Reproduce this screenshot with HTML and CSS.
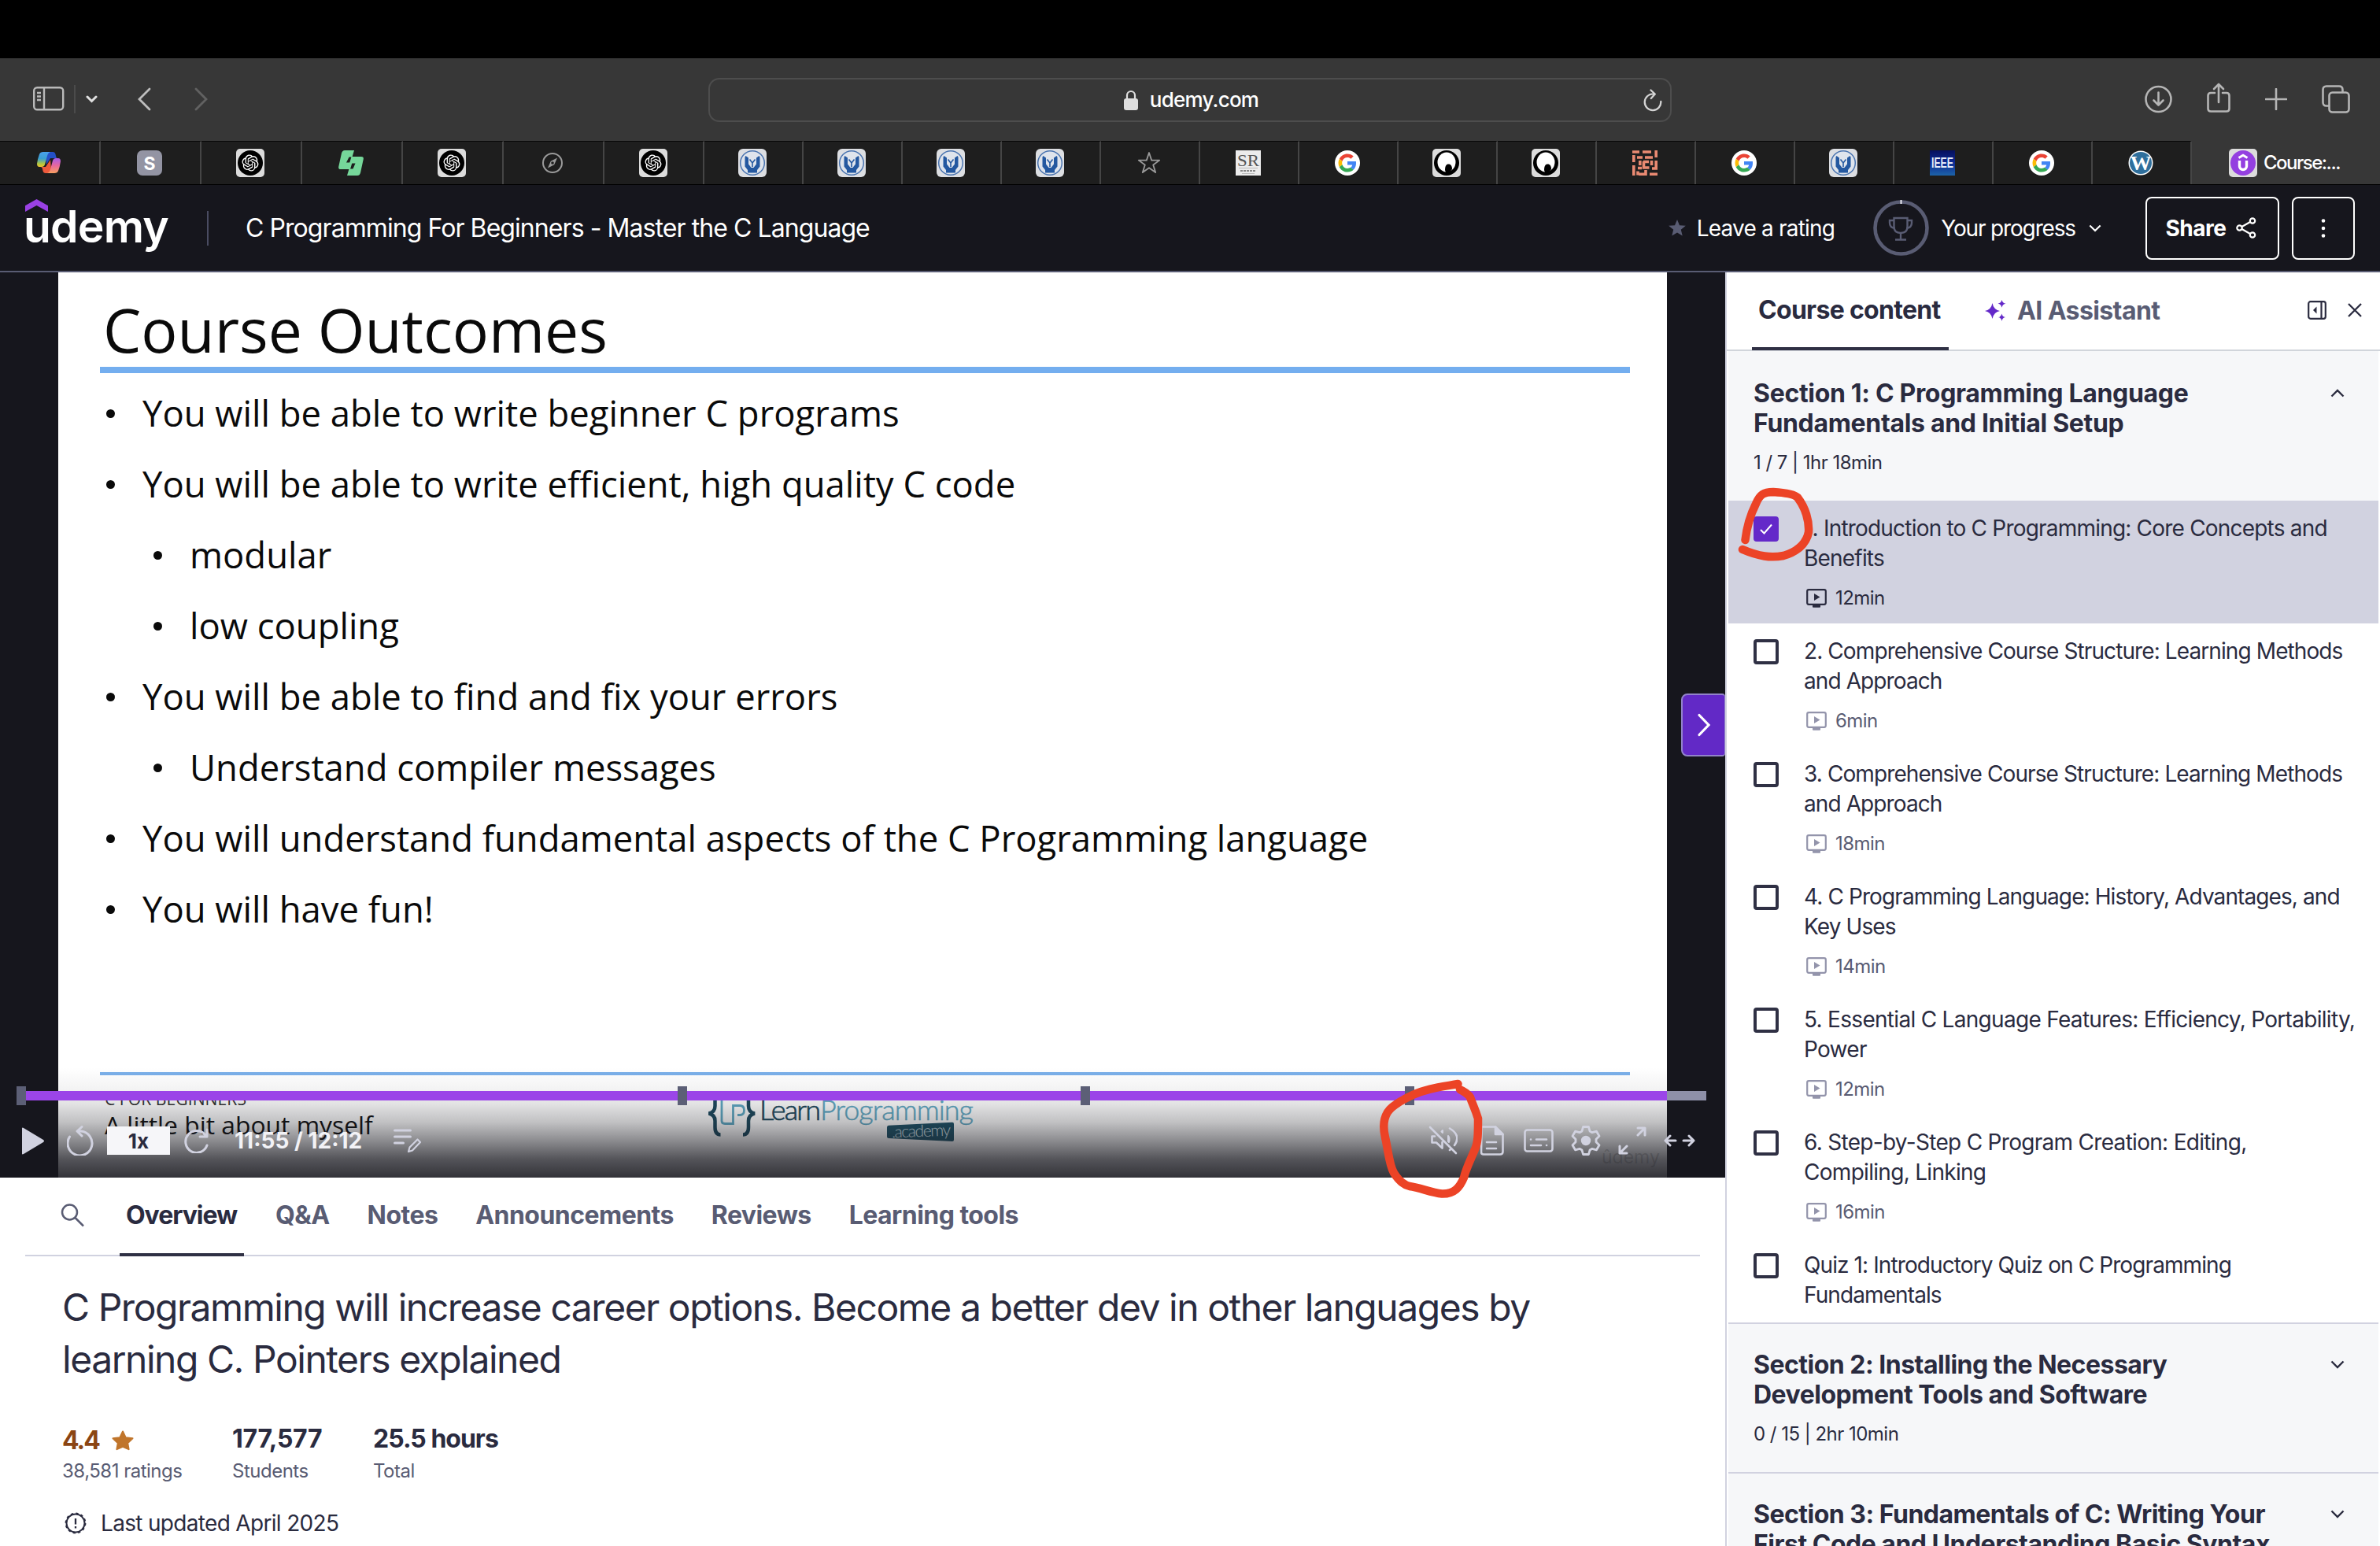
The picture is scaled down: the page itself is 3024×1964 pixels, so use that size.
FILE: index.html
```html
<!DOCTYPE html>
<html lang="en">
<head>
<meta charset="utf-8">
<title>Course: C Programming For Beginners - Master the C Language | Udemy</title>
<link rel="stylesheet" href="styles.css">
</head>
<body>
<svg class="defs" aria-hidden="true">
  <defs>
    <linearGradient id="cp1" x1="0" y1="0" x2="0" y2="1"><stop offset="0" stop-color="#4aa0ec"/><stop offset=".45" stop-color="#3b9fd0"/><stop offset=".8" stop-color="#b5c83c"/><stop offset="1" stop-color="#f0c030"/></linearGradient>
    <linearGradient id="cp2" x1="0" y1="0" x2="0" y2="1"><stop offset="0" stop-color="#a95be8"/><stop offset=".5" stop-color="#e8689c"/><stop offset="1" stop-color="#f7a060"/></linearGradient>
    <linearGradient id="ie" x1="0" y1="0" x2="0" y2="1"><stop offset="0" stop-color="#06105c"/><stop offset=".5" stop-color="#0c2a94"/><stop offset="1" stop-color="#1d63a8"/></linearGradient>
  </defs>
  <symbol id="openai" viewBox="0 0 36 36">
    <rect width="36" height="36" rx="5" fill="#dcdcdc"/><circle cx="18" cy="18" r="16" fill="#000"/>
    <path transform="translate(7.5 7.5) scale(.875)" fill="#fff" d="M22.2819 9.8211a5.9847 5.9847 0 0 0-.5157-4.9108 6.0462 6.0462 0 0 0-6.5098-2.9A6.0651 6.0651 0 0 0 4.9807 4.1818a5.9847 5.9847 0 0 0-3.9977 2.9 6.0462 6.0462 0 0 0 .7427 7.0966 5.98 5.98 0 0 0 .511 4.9107 6.051 6.051 0 0 0 6.5146 2.9001A5.9847 5.9847 0 0 0 13.2599 24a6.0557 6.0557 0 0 0 5.7718-4.2058 5.9894 5.9894 0 0 0 3.9977-2.9001 6.0557 6.0557 0 0 0-.7475-7.0729zm-9.022 12.6081a4.4755 4.4755 0 0 1-2.8764-1.0408l.1419-.0804 4.7783-2.7582a.7948.7948 0 0 0 .3927-.6813v-6.7369l2.02 1.1686a.071.071 0 0 1 .038.052v5.5826a4.504 4.504 0 0 1-4.4945 4.4944zm-9.6607-4.1254a4.4708 4.4708 0 0 1-.5346-3.0137l.142.0852 4.783 2.7582a.7712.7712 0 0 0 .7806 0l5.8428-3.3685v2.3324a.0804.0804 0 0 1-.0332.0615L9.74 19.9502a4.4992 4.4992 0 0 1-6.1408-1.6464zM2.3408 7.8956a4.485 4.485 0 0 1 2.3655-1.9728V11.6a.7664.7664 0 0 0 .3879.6765l5.8144 3.3543-2.0201 1.1685a.0757.0757 0 0 1-.071 0l-4.8303-2.7865A4.504 4.504 0 0 1 2.3408 7.872zm16.5963 3.8558L13.1038 8.364 15.1192 7.2a.0757.0757 0 0 1 .071 0l4.8303 2.7913a4.4944 4.4944 0 0 1-.6765 8.1042v-5.6772a.79.79 0 0 0-.407-.667zm2.0107-3.0231l-.142-.0852-4.7735-2.7818a.7759.7759 0 0 0-.7854 0L9.409 9.2297V6.8974a.0662.0662 0 0 1 .0284-.0615l4.8303-2.7866a4.4992 4.4992 0 0 1 6.6802 4.66zM8.3065 12.863l-2.02-1.1638a.0804.0804 0 0 1-.038-.0567V6.0742a4.4992 4.4992 0 0 1 7.3757-3.4537l-.142.0805L8.704 5.459a.7948.7948 0 0 0-.3927.6813zm1.0976-2.3654l2.602-1.4998 2.6069 1.4998v2.9994l-2.5974 1.4997-2.6067-1.4997Z"/>
  </symbol>
  <symbol id="hands" viewBox="0 0 36 36">
    <rect width="36" height="36" rx="6" fill="#dcdee2"/><circle cx="18" cy="18" r="15.300" fill="#dfe4ec" stroke="#4a74b0" stroke-width="1.500"/>
    <path fill="#2458a0" d="M9.500 9l3.500 2.500v8l3.500 4.500h3l3.500-4.500v-8L26.500 9l1 1.500v12L24 27v3.500H12V27l-3.500-4.500v-12z"/>
    <path fill="none" stroke="#2458a0" stroke-width="1.600" d="M14.500 13.500l3.500 4.500 3.500-4.500M18 17v6"/>
  </symbol>
  <symbol id="google" viewBox="0 0 32 32">
    <circle cx="16" cy="16" r="16" fill="#fff"/>
    <g transform="translate(4.500 4.500) scale(.48)">
      <path fill="#EA4335" d="M24 9.500c3.540 0 6.710 1.220 9.210 3.600l6.850-6.850C35.900 2.380 30.470 0 24 0 14.620 0 6.510 5.380 2.560 13.220l7.980 6.190C12.430 13.720 17.740 9.500 24 9.500z"/>
      <path fill="#4285F4" d="M46.980 24.550c0-1.570-.15-3.090-.38-4.550H24v9.020h12.940c-.58 2.960-2.260 5.480-4.780 7.180l7.730 6c4.510-4.180 7.090-10.360 7.090-17.650z"/>
      <path fill="#FBBC05" d="M10.530 28.590c-.48-1.450-.76-2.990-.76-4.590s.27-3.140.76-4.590l-7.980-6.190C.92 16.460 0 20.120 0 24c0 3.880.92 7.540 2.560 10.780l7.970-6.190z"/>
      <path fill="#34A853" d="M24 48c6.480 0 11.930-2.130 15.890-5.810l-7.730-6c-2.150 1.450-4.920 2.300-8.160 2.300-6.260 0-11.570-4.220-13.470-9.910l-7.980 6.190C6.510 42.620 14.620 48 24 48z"/>
    </g>
  </symbol>
  <symbol id="quill" viewBox="0 0 36 36">
    <rect width="36" height="36" rx="5" fill="#dcdcdc"/><circle cx="18" cy="18" r="16" fill="#000"/><ellipse cx="18" cy="17" rx="11.500" ry="12.500" fill="#fff"/><path fill="#000" d="M16 27c0-5 1.500-7.500 4.500-7.500s4.500 2.500 4.500 6.500l-3 4h-5z"/>
  </symbol>
  <symbol id="lesson" viewBox="0 0 26 24">
    <rect x="1.200" y="1.200" width="23.600" height="18.600" rx="2" fill="none" stroke="currentColor" stroke-width="2.200"/><path fill="currentColor" d="M10 6l7.500 4.500L10 15zM8 20.500h10V23q0 .8-1 .8H9q-1 0-1-.8z"/>
  </symbol>
  <symbol id="down" viewBox="0 0 18 11"><path d="M1.500 1.500L9 9l7.500-7.500" fill="none" stroke="currentColor" stroke-width="2.400"/></symbol>
</svg>

<div class="bezel"></div>

<div class="toolbar">
  <div class="toolbar-left">
    <svg width="40" height="31" viewBox="0 0 40 31" fill="none" stroke="#b9b9b9" stroke-width="2.400"><rect x="1.200" y="1.200" width="37" height="28" rx="4"/><path d="M14 1v28M5 8h5M5 12.500h5M5 17h5"/></svg>
    <span class="tool-sep"></span>
    <svg class="tool-menu" width="15" height="10" viewBox="0 0 15 10" fill="none" stroke="#e0e0e0" stroke-width="3" stroke-linecap="round"><path d="M2 2l5.500 5.500L13 2"/></svg>
    <svg class="tool-back" width="17" height="30" viewBox="0 0 17 30" fill="none" stroke="#bdbdbd" stroke-width="2.800" stroke-linecap="round"><path d="M15 2L2 15l13 13"/></svg>
    <svg class="tool-fwd" width="17" height="30" viewBox="0 0 17 30" fill="none" stroke="#616161" stroke-width="2.800" stroke-linecap="round"><path d="M2 2l13 13L2 28"/></svg>
  </div>
  <div class="address">
    <svg width="18" height="26" viewBox="0 0 18 26"><rect y="11" width="18" height="15" rx="3" fill="#dedede"/><path d="M4 12V7a5 5 0 0 1 10 0v5" fill="none" stroke="#dedede" stroke-width="2.200"/></svg>
    <span>udemy.com</span>
    <svg class="reload" width="24" height="29" viewBox="0 0 24 29" fill="none" stroke="#d4d4d4" stroke-width="2.300" stroke-linecap="round" stroke-linejoin="round"><path d="M13 6.500A10.300 10.300 0 1 0 22.300 16M9.500 1.500l5.300 5-5 5.500"/></svg>
  </div>
  <div class="toolbar-right">
    <svg width="35" height="36" viewBox="0 0 35 36"><circle cx="17.500" cy="18" r="16"/><path d="M17.500 9.500v16M11.500 19.500l6 6 6-6"/></svg>
    <svg class="tool-share" width="30" height="38" viewBox="0 0 30 38"><path d="M10 13H5q-3.500 0-3.500 3.500V33q0 3.500 3.500 3.500h20q3.500 0 3.500-3.500V16.500Q28.500 13 25 13h-5M15 25V2M9 8l6-6 6 6"/></svg>
    <svg width="28" height="28" viewBox="0 0 28 28"><path d="M14 1v26M1 14h26"/></svg>
    <svg width="36" height="36" viewBox="0 0 36 36"><rect x="9.500" y="9.500" width="25" height="25" rx="4"/><path d="M9 26.500H6q-4.500 0-4.500-4.500V6Q1.500 1.500 6 1.500h16q4.500 0 4.500 4.500v3"/></svg>
  </div>
</div>

<div class="tabstrip">
  <div class="btab wide"><svg width="30" height="28" viewBox="0 0 30 28"><path fill="#2450c8" d="M14 0h6q3 0 3.500 3l1 4q.3 1 1.500 1h-9l-5 8-1-10z"/><path fill="#ee5a3c" d="M1 19h10l6-9 1 12-3 5H11q-3 0-3.500-3L6.500 20q-1-1-2.500-1z"/><path fill="url(#cp1)" d="M8 0h9q-3 1-4 5l-3 11q-1 3-4 3H3q-3 0-3-4Q1 8 3 3 4 0 8 0z"/><path fill="url(#cp2)" d="M22 27h-9q3-1 4-5l3-11q1-3 4-3h3q3 0 3 4-1 7-3 12-1 3-5 3z"/></svg></div>
  <div class="btab wide"><span class="fav-s">S</span></div>
  <div class="btab wide"><svg width="36" height="36"><use href="#openai"/></svg></div>
  <div class="btab wide"><svg width="32" height="32" viewBox="0 0 32 32" fill="#76d79a"><path d="M8 0h12l-2.500 8.500h-4L10 15.500h7.500L15 24H3q-3.500 0-2.700-3.500L4 3.500Q5 0 8 0z"/><path d="M24 32H11l2.500-8.500h5l3-7H14L16.500 8H29q3.500 0 2.700 3.500L28 28.500Q27 32 24 32z"/></svg></div>
  <div class="btab wide"><svg width="36" height="36"><use href="#openai"/></svg></div>
  <div class="btab wide"><svg width="28" height="28" viewBox="0 0 28 28"><circle cx="14" cy="14" r="12" fill="none" stroke="#9b9b9b" stroke-width="2"/><path fill="#9b9b9b" d="M20 7.500l-3.800 8.700L8 20.500l3.800-8.700z"/><circle cx="14" cy="14" r="1.800" fill="#1e1e1e"/></svg></div>
  <div class="btab wide"><svg width="36" height="36"><use href="#openai"/></svg></div>
  <div class="btab"><svg width="36" height="36"><use href="#hands"/></svg></div>
  <div class="btab"><svg width="36" height="36"><use href="#hands"/></svg></div>
  <div class="btab"><svg width="36" height="36"><use href="#hands"/></svg></div>
  <div class="btab"><svg width="36" height="36"><use href="#hands"/></svg></div>
  <div class="btab"><svg width="30" height="30" viewBox="0 0 30 30"><path fill="none" stroke="#9b9b9b" stroke-width="1.800" stroke-linejoin="round" d="M15 2l3.200 9.600h10L20.200 17.500l3 9.600L15 21.200 6.800 27.100l3-9.600-8-5.900h10z"/></svg></div>
  <div class="btab"><svg width="32" height="32" viewBox="0 0 32 32"><rect width="32" height="32" fill="#ececec"/><text x="2" y="20" font-family="Liberation Serif" font-size="22" textLength="28" lengthAdjust="spacingAndGlyphs" fill="#555">SR</text><path stroke="#bbb" d="M4 22.500h24M8 29.500h16"/><path stroke="#888" stroke-width="2" stroke-dasharray="3 1" d="M6 26h20"/></svg></div>
  <div class="btab"><svg width="32" height="32"><use href="#google"/></svg></div>
  <div class="btab"><svg width="36" height="36"><use href="#quill"/></svg></div>
  <div class="btab"><svg width="36" height="36"><use href="#quill"/></svg></div>
  <div class="btab"><svg width="32" height="32" viewBox="0 0 32 32" fill="none" stroke="#e98a72" stroke-width="3.600"><path d="M0 2h9M13 2h11M30.200 0v9M1.800 6v9M6 9h7M16 9h10M9.800 13v6M24.500 13v6M1.800 19v13M30.200 13v9M14 14.500h7M14.500 14v8h7M7 22.500h5M25 23h7M8 30.200h10M17 25v7M22 30.200h10M7 26.500v5"/></svg></div>
  <div class="btab"><svg width="32" height="32"><use href="#google"/></svg></div>
  <div class="btab"><svg width="36" height="36"><use href="#hands"/></svg></div>
  <div class="btab"><svg width="32" height="32" viewBox="0 0 32 32"><rect width="32" height="32" fill="url(#ie)"/><text x="2" y="22" font-family="Liberation Sans" font-weight="700" font-size="19" textLength="28" lengthAdjust="spacingAndGlyphs" fill="#e6ecf8">IEEE</text></svg></div>
  <div class="btab"><svg width="32" height="32"><use href="#google"/></svg></div>
  <div class="btab"><svg width="32" height="32" viewBox="0 0 32 32"><circle cx="16" cy="16" r="15.500" fill="#fff"/><circle cx="16" cy="16" r="14" fill="#2f6f9c"/><text x="16" y="25" text-anchor="middle" font-family="Liberation Serif" font-weight="700" font-size="26" textLength="27" lengthAdjust="spacingAndGlyphs" fill="#fff">W</text></svg></div>
  <div class="btab current"><svg width="36" height="36" viewBox="0 0 36 36"><rect width="36" height="36" rx="5" fill="#dcdcdc"/><circle cx="18" cy="18" r="16" fill="#9440e0"/><path d="M12.500 11.500L18 8.300l5.500 3.200" fill="none" stroke="#fff" stroke-width="3"/><path d="M13.500 15v7a4.500 4.500 0 0 0 9 0v-7" fill="none" stroke="#fff" stroke-width="3.400"/></svg><span>Course:...</span></div>
</div>

<header class="header">
  <div class="logo"><svg class="logo-hat" width="29" height="17" viewBox="0 0 29 17"><path fill="#9a41e4" d="M14.500 0L29 8.300V16L14.500 8 0 16V8.300z"/></svg><span>udemy</span></div>
  <span class="header-sep"></span>
  <h1 class="course-title">C Programming For Beginners - Master the C Language</h1>
  <div class="rate"><svg width="22" height="21" viewBox="0 0 22 21"><path fill="#595c73" d="M11 0l3 7.200 7.800.6-6 5 1.900 7.700L11 16.400l-6.700 4.100 1.900-7.700-6-5L8 7.200z"/></svg><span>Leave a rating</span></div>
  <div class="progress">
    <svg width="71" height="71" viewBox="0 0 71 71" fill="none"><circle cx="35.500" cy="35.500" r="33" stroke="#595c73" stroke-width="4.600"/><path d="M35.500 0v5" stroke="#e8e8f0" stroke-width="2"/><g stroke="#595c73" stroke-width="2.400"><path d="M26.500 23h17v11q0 8-8.500 8t-8.500-8z"/><path d="M26 26h-5v3q0 6 6.500 7M44 26h5v3q0 6-6.500 7M35 42v8M28 50.500h14"/></g></svg>
    <span>Your progress</span>
    <svg width="16" height="10"><use href="#down"/></svg>
  </div>
  <button class="btn share"><span>Share</span><svg width="26" height="27" viewBox="0 0 26 27" fill="none" stroke="#fff" stroke-width="2.200"><circle cx="4.500" cy="13.500" r="3.200"/><circle cx="21" cy="4.500" r="3.200"/><circle cx="21" cy="22.500" r="3.200"/><path d="M7.500 12L18 6M7.500 15L18 21"/></svg></button>
  <button class="btn more"><svg width="6" height="26" viewBox="0 0 6 26" fill="#fff"><circle cx="3" cy="3.500" r="2.300"/><circle cx="3" cy="13" r="2.300"/><circle cx="3" cy="22.500" r="2.300"/></svg></button>
</header>

<div class="layout">
  <main>
    <section class="player">
      <div class="slide">
        <h2>Course Outcomes</h2>
        <ul>
          <li>You will be able to write beginner C programs</li>
          <li>You will be able to write efficient, high quality C code</li>
          <li class="sub">modular</li>
          <li class="sub">low coupling</li>
          <li>You will be able to find and fix your errors</li>
          <li class="sub">Understand compiler messages</li>
          <li>You will understand fundamental aspects of the C Programming language</li>
          <li>You will have fun!</li>
        </ul>
        <div class="slide-foot">
          <div class="foot-notes"><span class="foot-kicker">C FOR BEGINNERS</span><span class="foot-line">A little bit about myself</span></div>
          <svg class="lpa" width="345" height="70" viewBox="0 0 345 70" fill="none">
            <path d="M15.500 6Q8.500 5 8.500 14v8q0 8-8 9.500 8 1.500 8 9.500v8q0 9.500 7 9.500M44 6q7-1 7 8v8q0 8 8 9.500-8 1.500-8 9.500v8q0 9.500-7 9.500" stroke="#1d4a5e" stroke-width="4.500"/>
            <path d="M17 14v27q0 3.500 4 3.500h10.500V21.500h8.500q5.500 0 5.500 6t-5.500 6h-3" stroke="#5fa9c4" stroke-width="2.800"/>
            <text x="65" y="39.500" class="lp-dark" textLength="78">Learn</text><text x="142" y="39.500" class="lp-light" textLength="195">Programming</text>
            <path fill="#1f5368" d="M227 49q0-2 2-2.200l81-4q2 0 2 2V65q0 2-2 2l-81-4q-2 0-2-2z"/><text x="233" y="61" class="lp-tag" textLength="75" transform="rotate(-2 270 54)">.academy</text>
          </svg>
        </div>
      </div>
      <div class="shade"></div>
      <span class="watermark">ûdemy</span>
      <div class="track"><span class="played"></span><i class="mark m1"></i><i class="mark m2"></i><i class="mark m3"></i><i class="mark m4"></i></div>
      <div class="controls">
        <svg class="c-play" width="30" height="35" viewBox="0 0 30 35"><path fill="#d1d2e0" d="M1 1.500Q1 0 3 1l25 15q2 1.500 0 3L3 34q-2 1-2-.5z"/></svg>
        <svg class="c-back" width="36" height="38" viewBox="0 0 36 38" fill="none" stroke="#d1d2e0" stroke-width="3" stroke-linecap="round" stroke-linejoin="round"><path d="M3.500 14A15.500 15.500 0 1 0 18 7h-4M19 1.500L13 7l6 6"/></svg>
        <span class="speed">1x</span>
        <svg class="c-fwd" width="32" height="32" viewBox="0 0 32 32" fill="none" stroke="#d1d2e0" stroke-width="3" stroke-linecap="round" stroke-linejoin="round"><path d="M29 22A14 14 0 1 1 27 9M29 2v9h-9"/></svg>
        <span class="time">11:55 / 12:12</span>
        <svg class="c-note" width="36" height="32" viewBox="0 0 36 32" fill="none" stroke="#d1d2e0" stroke-width="3" stroke-linecap="round" stroke-linejoin="round"><path d="M1.500 3h20M1.500 11h20M1.500 19h11"/><path stroke-width="2.200" d="M19 30l1.500-5.500L30.500 14.500l3.500 3.500L24 28.500z"/></svg>
        <div class="c-right">
          <svg class="c-mute" width="37" height="38" viewBox="0 0 37 38" fill="none" stroke="#d1d2e0" stroke-width="2.600" stroke-linecap="round" stroke-linejoin="round"><path d="M2 2l33 33M8 13.500H4.500v8H10l7.500 7V21"/><path fill="#d1d2e0" stroke-width="2" d="M16.500 7.500l1.500-1.500v3zM25 13q2.500 3 1 8l-1-1z"/><path d="M27 3.500q15 9 6 21.500M27 31l2-1.500"/></svg>
          <svg class="c-doc" width="30" height="38" viewBox="0 0 30 38" fill="none" stroke="#d1d2e0" stroke-width="2.600" stroke-linecap="round" stroke-linejoin="round"><path d="M1.500 1.500H19L28.500 11v22q0 3.500-3.500 3.500H4q-3 0-3-3z"/><path fill="#d1d2e0" d="M19 1.500V11h9.500z"/><path d="M8 21h12M8 29h12"/></svg>
          <svg width="38" height="30" viewBox="0 0 38 30" fill="none" stroke="#d1d2e0" stroke-width="2.600" stroke-linecap="round"><rect x="1.500" y="1.500" width="35" height="27" rx="3"/><path d="M9 13.500h.1M16 13.500h13M9 21h13M29 21h.1"/></svg>
          <svg width="38" height="38" viewBox="0 0 38 38" fill="none" stroke="#d1d2e0" stroke-width="2.800" stroke-linejoin="round"><path d="M15.500 1.500h7l1.500 5.500 3 1.700 5.500-1.500 3.500 6-4 4v3.600l4 4-3.500 6-5.500-1.500-3 1.700-1.500 5.500h-7L14 31l-3-1.700-5.500 1.500-3.500-6 4-4v-3.600l-4-4 3.500-6L11 8.700 14 7z"/><circle cx="19" cy="19" r="4.800" fill="#d1d2e0"/></svg>
          <svg width="36" height="36" viewBox="0 0 36 36" fill="none" stroke="#d1d2e0" stroke-width="3" stroke-linecap="round" stroke-linejoin="round"><path d="M25 2h9v9M34 2l-9 9M2 25v9h9M2 34l9-9"/></svg>
          <svg width="40" height="16" viewBox="0 0 40 16" fill="none" stroke="#d1d2e0" stroke-width="3" stroke-linecap="round" stroke-linejoin="round"><path d="M15 8H2M8 2L2 8l6 6M25 8h13M32 2l6 6-6 6"/></svg>
        </div>
      </div>
      <button class="collapse"><svg width="18" height="30" viewBox="0 0 18 30" fill="none" stroke="#fff" stroke-width="3.200" stroke-linecap="round"><path d="M3 2.500L15 15 3 27.500"/></svg></button>
    </section>

    <nav class="tabs">
      <svg class="tab-search" width="30" height="30" viewBox="0 0 30 30" fill="none" stroke="#595c73" stroke-width="2.500"><circle cx="11.500" cy="11" r="9.500"/><path d="M18.500 18l10.500 10.500"/></svg>
      <span class="tab on">Overview</span><span class="tab">Q&amp;A</span><span class="tab">Notes</span><span class="tab">Announcements</span><span class="tab">Reviews</span><span class="tab">Learning tools</span>
    </nav>

    <section class="overview">
      <p class="headline">C Programming will increase career options. Become a better dev in other languages by<br>learning C. Pointers explained</p>
      <div class="stats">
        <div class="stat stat-rating"><b>4.4 <svg width="28" height="26" viewBox="0 0 28 26"><path fill="#c0752b" stroke="#c0752b" stroke-width="2" stroke-linejoin="round" d="M14 1.500l3.700 7.700 8.800 1-6.300 6 1.400 8L14 20.800 6.400 24.200l1.400-8-6.300-6 8.800-1z"/></svg></b><small>38,581 ratings</small></div>
        <div class="stat stat-students"><b>177,577</b><small>Students</small></div>
        <div class="stat stat-hours"><b>25.5 hours</b><small>Total</small></div>
      </div>
      <p class="updated"><svg width="28" height="28" viewBox="0 0 28 28" fill="none" stroke="#2a2b3f" stroke-width="2"><circle cx="14" cy="14" r="11.500"/><circle cx="14" cy="14" r="12.300" stroke-width="2.200" stroke-dasharray="3.200 3.240"/><path stroke-width="2.300" d="M14 8v7.500M14 18v2.400"/></svg><span>Last updated April 2025</span></p>
    </section>
  </main>

  <aside class="sidebar">
    <div class="side-tabs">
      <span class="side-tab on">Course content</span>
      <span class="side-tab ai"><svg width="27" height="27" viewBox="0 0 27 27" fill="#6429c9"><path d="M9.500 4q1.500 8.500 9.500 10-8 1.500-9.500 10Q8 15.500 0 14q8-1.500 9.500-10zM21.500 0q.8 4 5 4.700-4.200.7-5 5-.8-4.300-5-5 4.200-.7 5-4.700zM21.500 17.500q.7 4 4.500 4.600-3.800.6-4.500 4.900-.7-4.300-4.500-4.900 3.800-.6 4.500-4.600z"/></svg>AI Assistant</span>
      <svg class="side-expand" width="24" height="24" viewBox="0 0 24 24" fill="none" stroke="#2a2b3f" stroke-width="2.200"><rect x="1.200" y="1.200" width="21.600" height="21.600" rx="2.500"/><path d="M17.500 1v22"/><path fill="#2a2b3f" stroke="none" d="M11.500 7.500v9L7 12z"/></svg>
      <svg class="side-close" width="18" height="18" viewBox="0 0 18 18" fill="none" stroke="#2a2b3f" stroke-width="2.300"><path d="M1 1l16 16M17 1L1 17"/></svg>
    </div>
    <div class="side-body">
      <div class="sec first"><div><h3>Section 1: C Programming Language<br>Fundamentals and Initial Setup</h3><p>1 / 7 | 1hr 18min</p></div><svg class="flip" width="18" height="11"><use href="#down"/></svg></div>
      <div class="item active"><span class="box checked"><svg width="16" height="14" viewBox="0 0 16 14" fill="none" stroke="#fff" stroke-width="2"><path d="M1 8l4.500 4.500L15 1.500"/></svg></span><div><p>1. Introduction to C Programming: Core Concepts and<br>Benefits</p><small><svg width="26" height="24"><use href="#lesson"/></svg>12min</small></div></div>
      <div class="item tight"><span class="box"></span><div><p>2. Comprehensive Course Structure: Learning Methods<br>and Approach</p><small><svg width="26" height="24"><use href="#lesson"/></svg>6min</small></div></div>
      <div class="item tight"><span class="box"></span><div><p>3. Comprehensive Course Structure: Learning Methods<br>and Approach</p><small><svg width="26" height="24"><use href="#lesson"/></svg>18min</small></div></div>
      <div class="item tight"><span class="box"></span><div><p>4. C Programming Language: History, Advantages, and<br>Key Uses</p><small><svg width="26" height="24"><use href="#lesson"/></svg>14min</small></div></div>
      <div class="item loose"><span class="box"></span><div><p>5. Essential C Language Features: Efficiency, Portability,<br>Power</p><small><svg width="26" height="24"><use href="#lesson"/></svg>12min</small></div></div>
      <div class="item loose"><span class="box"></span><div><p>6. Step-by-Step C Program Creation: Editing,<br>Compiling, Linking</p><small><svg width="26" height="24"><use href="#lesson"/></svg>16min</small></div></div>
      <div class="item quiz tight"><span class="box"></span><div><p>Quiz 1: Introductory Quiz on C Programming<br>Fundamentals</p></div></div>
      <div class="sec"><div><h3>Section 2: Installing the Necessary<br>Development Tools and Software</h3><p>0 / 15 | 2hr 10min</p></div><svg width="18" height="11"><use href="#down"/></svg></div>
      <div class="sec"><div><h3>Section 3: Fundamentals of C: Writing Your<br>First Code and Understanding Basic Syntax</h3></div><svg width="18" height="11"><use href="#down"/></svg></div>
    </div>
  </aside>
</div>

<svg class="ink" width="3024" height="1964" viewBox="0 0 3024 1964" fill="none" stroke="#ec4326" stroke-width="10.500" stroke-linecap="round" stroke-linejoin="round">
  <path d="M1852.500 1377C1830 1381 1812 1383 1795 1391C1780 1398 1768 1405 1763 1413C1758 1421 1757 1432 1760 1445C1764 1462 1765 1480 1771 1490C1776 1498 1783 1505 1791 1507C1805 1509 1818 1515 1832 1516.500C1848 1517 1855 1508 1860 1496C1862 1486 1870 1470 1874 1460C1878 1452 1878 1440 1878 1421C1874 1408 1871 1403 1868 1394C1865 1389 1860 1387 1855 1384"/>
  <path d="M2217.500 686C2220 665 2227 648 2231 640C2236 628 2241 625 2253 625C2270 626 2280 628 2284 632C2294 645 2299 662 2298 676C2295 692 2281 702 2266 706C2250 709 2235 707 2214 698"/>
</svg>
</body>
</html>
```
FILE: styles.css
```css
* { box-sizing: border-box; margin: 0; padding: 0; }

body {
  width: 3024px;
  height: 1964px;
  overflow: hidden;
  position: relative;
  display: flex;
  flex-direction: column;
  background: #fff;
  color: #2a2b3f;
  font-family: Inter, sans-serif;
}

svg { display: block; flex: none; }
.defs { position: absolute; width: 0; height: 0; }
h1, h2, h3 { font-weight: 400; }
button { font: inherit; background: none; border: 0; }
span, b, small, p, h1, h3 { white-space: nowrap; }

/* Browser chrome */
.bezel { height: 74px; background: #000; flex: none; }

.toolbar {
  flex: none;
  height: 105px;
  background: #373737;
  display: grid;
  grid-template-columns: 900px 1224px 900px;
  align-items: center;
}
.toolbar-left { display: flex; align-items: center; padding: 0 0 2px 42px; }
.tool-sep { width: 2px; height: 36px; background: #4b4b4b; margin-left: 12px; }
.tool-menu { margin-left: 13px; }
.tool-back { margin-left: 51px; }
.tool-fwd { margin-left: 55px; }
.address {
  position: relative;
  height: 56px;
  border: 2px solid #4d4d4d;
  border-radius: 14px;
  display: flex;
  align-items: center;
  justify-content: center;
  gap: 15px;
  padding-left: 3px;
  font-size: 26px;
  font-weight: 500;
  letter-spacing: -.77px;
  color: #fff;
}
.reload { position: absolute; right: 10px; top: 12px; }
.toolbar-right {
  display: flex;
  align-items: center;
  justify-content: flex-end;
  gap: 44px;
  padding: 0 38px 2px 0;
  fill: none;
  stroke: #b5b5b5;
  stroke-width: 2.6px;
  stroke-linecap: round;
  stroke-linejoin: round;
}
.tool-share { margin-top: -3px; }

.tabstrip { flex: none; height: 56px; display: flex; background: #1e1e1e; border-bottom: 1px solid #000; }
.btab {
  width: 126px;
  padding-right: 2px;
  border-top: 1px solid #080808;
  border-right: 2px solid #454545;
  display: flex;
  align-items: center;
  justify-content: center;
}
.btab.wide { width: 128px; }
.btab.wide:nth-child(7) { width: 127px; }
.btab.current {
  flex: 1;
  border: 0;
  background: #373737;
  justify-content: flex-start;
  padding-left: 47px;
  gap: 8px;
  font-size: 24px;
  font-weight: 500;
  letter-spacing: -1.5px;
  color: #fff;
}
.fav-s {
  width: 32px;
  height: 32px;
  border-radius: 7px;
  background: #9394a3;
  color: #fff;
  font-size: 23px;
  font-weight: 700;
  line-height: 34px;
  text-align: center;
}

/* Course header */
.header {
  flex: none;
  height: 111px;
  background: #16161d;
  border-bottom: 2px solid #595c73;
  display: flex;
  align-items: center;
  padding: 0 32px;
  color: #fff;
  font-size: 28px;
}
.logo { position: relative; width: 231px; }
.logo span {
  display: block;
  margin: -3px 0 0 -2px;
  font-size: 57px;
  font-weight: 600;
  line-height: 70px;
  letter-spacing: -.8px;
}
.logo-hat { position: absolute; left: 0; top: -3px; }
.header-sep { width: 2px; height: 44px; background: #4a4c62; }
.course-title { margin-left: 47px; font-size: 32px; letter-spacing: -.93px; }
.rate { margin-left: auto; display: flex; align-items: center; gap: 14px; letter-spacing: -.8px; }
.progress { margin-left: 49px; display: flex; align-items: center; gap: 15px; letter-spacing: -1.15px; }
.progress span + svg { margin-left: 2px; }
.btn {
  height: 80px;
  border: 2px solid #fff;
  border-radius: 8px;
  display: flex;
  align-items: center;
  justify-content: center;
  color: #fff;
}
.share { width: 170px; margin-left: 56px; padding-right: 4px; gap: 12px; font-weight: 700; letter-spacing: -.44px; }
.more { width: 80px; margin-left: 16px; }

.layout { flex: 1; min-height: 0; display: grid; grid-template-columns: 2192px 832px; }

/* Video player */
.player { position: relative; height: 1150px; background: #16161d; padding: 0 74px; overflow: hidden; }
.slide {
  height: 100%;
  background: #fff;
  color: #0a0a0a;
  padding: 25px 47px 0 53px;
  font-family: "Open Sans", sans-serif;
}
.slide h2 {
  height: 103px;
  padding-left: 4px;
  border-bottom: 8px solid #74aeef;
  font-size: 76.8px;
  line-height: 95px;
}
.slide ul { list-style: none; padding-top: 5px; }
.slide li {
  position: relative;
  padding-left: 54px;
  font-size: 45.42px;
  line-height: 90px;
  white-space: nowrap;
}
.slide li.sub { padding-left: 114px; }
.slide li::before {
  content: "";
  position: absolute;
  left: 8px;
  top: 41px;
  width: 11px;
  height: 11px;
  border-radius: 50%;
  background: #0a0a0a;
}
.slide li.sub::before { left: 68px; }
.slide-foot {
  margin-top: 163px;
  border-top: 4px solid #7bb0ea;
  display: flex;
  align-items: flex-start;
  padding-left: 6px;
}
.foot-notes { width: 767px; display: flex; flex-direction: column; padding-top: 16px; color: #111; }
.foot-kicker { font-size: 21.2px; line-height: 28px; color: #333; }
.foot-line { font-size: 31.8px; line-height: 37px; }
.lpa { margin-top: 17px; font-family: Lato, sans-serif; font-weight: 300; font-size: 36px; }
.lp-dark { fill: #1d4a5e; stroke: #1d4a5e; stroke-width: .7px; }
.lp-light { fill: #5fa9c4; stroke: #5fa9c4; stroke-width: .5px; }
.lp-tag { fill: #d8e6ec; font-size: 21px; }
.shade {
  position: absolute;
  left: 74px;
  right: 74px;
  bottom: 0;
  height: 140px;
  background: linear-gradient(rgba(22,22,29,0), rgba(22,22,29,.05) 20%, rgba(22,22,29,.12) 33%, rgba(22,22,29,.27) 50%, rgba(22,22,29,.5) 67%, rgba(22,22,29,.73) 83%, rgba(22,22,29,.88));
}
.watermark {
  position: absolute;
  left: 2035px;
  top: 1110px;
  font-size: 23px;
  line-height: 28px;
  color: rgba(30,30,36,.22);
}
.track {
  position: absolute;
  left: 21px;
  top: 1034px;
  width: 2147px;
  height: 24px;
  background: linear-gradient(#8e90a8, #8e90a8) 0 6px / 100% 12px no-repeat;
}
.played { position: absolute; left: 0; top: 6px; width: 2097px; height: 12px; background: #9b45e8; }
.mark { position: absolute; top: 0; width: 12px; height: 24px; background: #5c5f76; }
.m1 { left: 0; }
.m2 { left: 840px; }
.m3 { left: 1352px; }
.m4 { left: 1764px; }
.controls {
  position: absolute;
  left: 27px;
  right: 38px;
  bottom: 25px;
  height: 44px;
  display: flex;
  align-items: center;
  color: #f2f2f6;
}
.c-back { margin-left: 28px; }
.speed {
  width: 80px;
  height: 36px;
  margin-left: 15px;
  background: #f6f6f9;
  color: #2a2b3f;
  font-size: 26px;
  font-weight: 700;
  line-height: 37px;
  text-align: center;
}
.c-fwd { margin-left: 18px; }
.time { margin-left: 32px; font-size: 28px; font-weight: 700; line-height: 46px; }
.c-note { margin-left: 40px; }
.c-right { margin-left: auto; display: flex; align-items: center; gap: 22px; }
.c-mute { margin-right: 7px; }
.c-doc { margin-right: 3px; }
.collapse {
  position: absolute;
  right: 0;
  top: 535px;
  width: 56px;
  height: 80px;
  background: #6229c6;
  border: 2px solid #9283c9;
  border-right-width: 1px;
  border-radius: 8px 4px 4px 8px;
  display: flex;
  align-items: center;
  justify-content: center;
}

/* Overview */
.tabs {
  margin: 0 32px;
  height: 100px;
  border-bottom: 2px solid #d1d2e0;
  display: flex;
  gap: 32px;
  padding-left: 45px;
  color: #595c73;
}
.tab-search { margin: 33px 13px 0 0; }
.tab {
  height: 100px;
  padding: 0 8px;
  font-size: 32px;
  font-weight: 700;
  line-height: 96px;
  letter-spacing: -.55px;
}
.tab.on { width: 158px; color: #2a2b3f; border-bottom: 4px solid #2f3044; letter-spacing: -1.05px; }
.overview { padding: 32px 79px 0; }
.headline { font-size: 48px; line-height: 66px; letter-spacing: -1.46px; }
.stats { display: flex; margin-top: 45px; }
.stat b { display: block; font-size: 32px; font-weight: 700; line-height: 45px; letter-spacing: -.5px; }
.stat small { display: block; font-size: 24px; line-height: 37px; color: #595c73; letter-spacing: -.5px; }
.stat-rating { width: 216px; }
.stat-rating b { display: flex; align-items: center; gap: 16px; color: #8b4513; padding-top: 4px; line-height: 41px; letter-spacing: -2px; }
.stat-students { width: 179px; }
.stat-students b { letter-spacing: -.3px; }
.stat-hours b { letter-spacing: -1px; }
.updated { margin-top: 28px; padding-left: 3px; display: flex; align-items: center; gap: 18px; font-size: 28px; line-height: 40px; letter-spacing: -.68px; }

/* Course content sidebar */
.sidebar { border-left: 2px solid #d1d2e0; background: #fff; overflow: hidden; }
.side-tabs {
  height: 100px;
  border-bottom: 2px solid #d1d5db;
  display: flex;
  align-items: center;
  padding: 0 23px 0 32px;
}
.side-tab {
  height: 100px;
  padding: 0 8px;
  font-size: 32px;
  font-weight: 700;
  line-height: 97px;
  color: #595c73;
  letter-spacing: -.6px;
}
.side-tab.on { color: #2a2b3f; border-bottom: 4px solid #2f3044; letter-spacing: -.7px; width: 250px; }
.side-tab.ai { display: flex; align-items: center; gap: 14px; margin-left: 38px; line-height: 97px; padding-bottom: 2px; }
.side-expand { margin: -2px 27px 0 auto; }
.side-close { margin-top: -3px; }
.side-body { padding: 0 2px; }
.sec {
  height: 190px;
  border-top: 2px solid #d1d2e0;
  background: #f6f7f9;
  display: flex;
  justify-content: space-between;
  padding: 33px 43px 0 32px;
}
.sec.first { border-top-color: #f6f7f9; }
.sec h3 { font-size: 32px; font-weight: 700; line-height: 38.4px; letter-spacing: -.5px; }
.sec.first h3 { letter-spacing: -.32px; }
.sec p { margin-top: 13px; font-size: 24px; line-height: 34px; letter-spacing: -.52px; }
.sec svg { margin-top: 13px; }
.flip { transform: scaleY(-1); }
.item { height: 156px; padding: 16px 0 0 32px; display: flex; gap: 32px; }
.item.active { background: #d1d2e0; }
.item.quiz { height: 108px; }
.item p { font-size: 28px; line-height: 38.4px; letter-spacing: -.8px; }
.item.tight p { letter-spacing: -.9px; }
.item.loose p { letter-spacing: -.7px; }
.item small {
  margin-top: 14px;
  padding-left: 3px;
  display: flex;
  align-items: center;
  gap: 11px;
  font-size: 24px;
  line-height: 34px;
  letter-spacing: -.55px;
  color: #595c73;
}
.item small svg { color: #9394ab; margin-top: 1px; }
.item.active small, .item.active small svg { color: #2a2b3f; }
.box {
  flex: none;
  width: 32px;
  height: 32px;
  margin-top: 4px;
  border: 4px solid #2f3044;
  border-radius: 4px;
}
.box.checked { border-color: #6429c9; background: #6429c9; display: flex; align-items: center; justify-content: center; }

/* Hand-drawn marks over the page */
.ink { position: absolute; left: 0; top: 0; pointer-events: none; }
```
